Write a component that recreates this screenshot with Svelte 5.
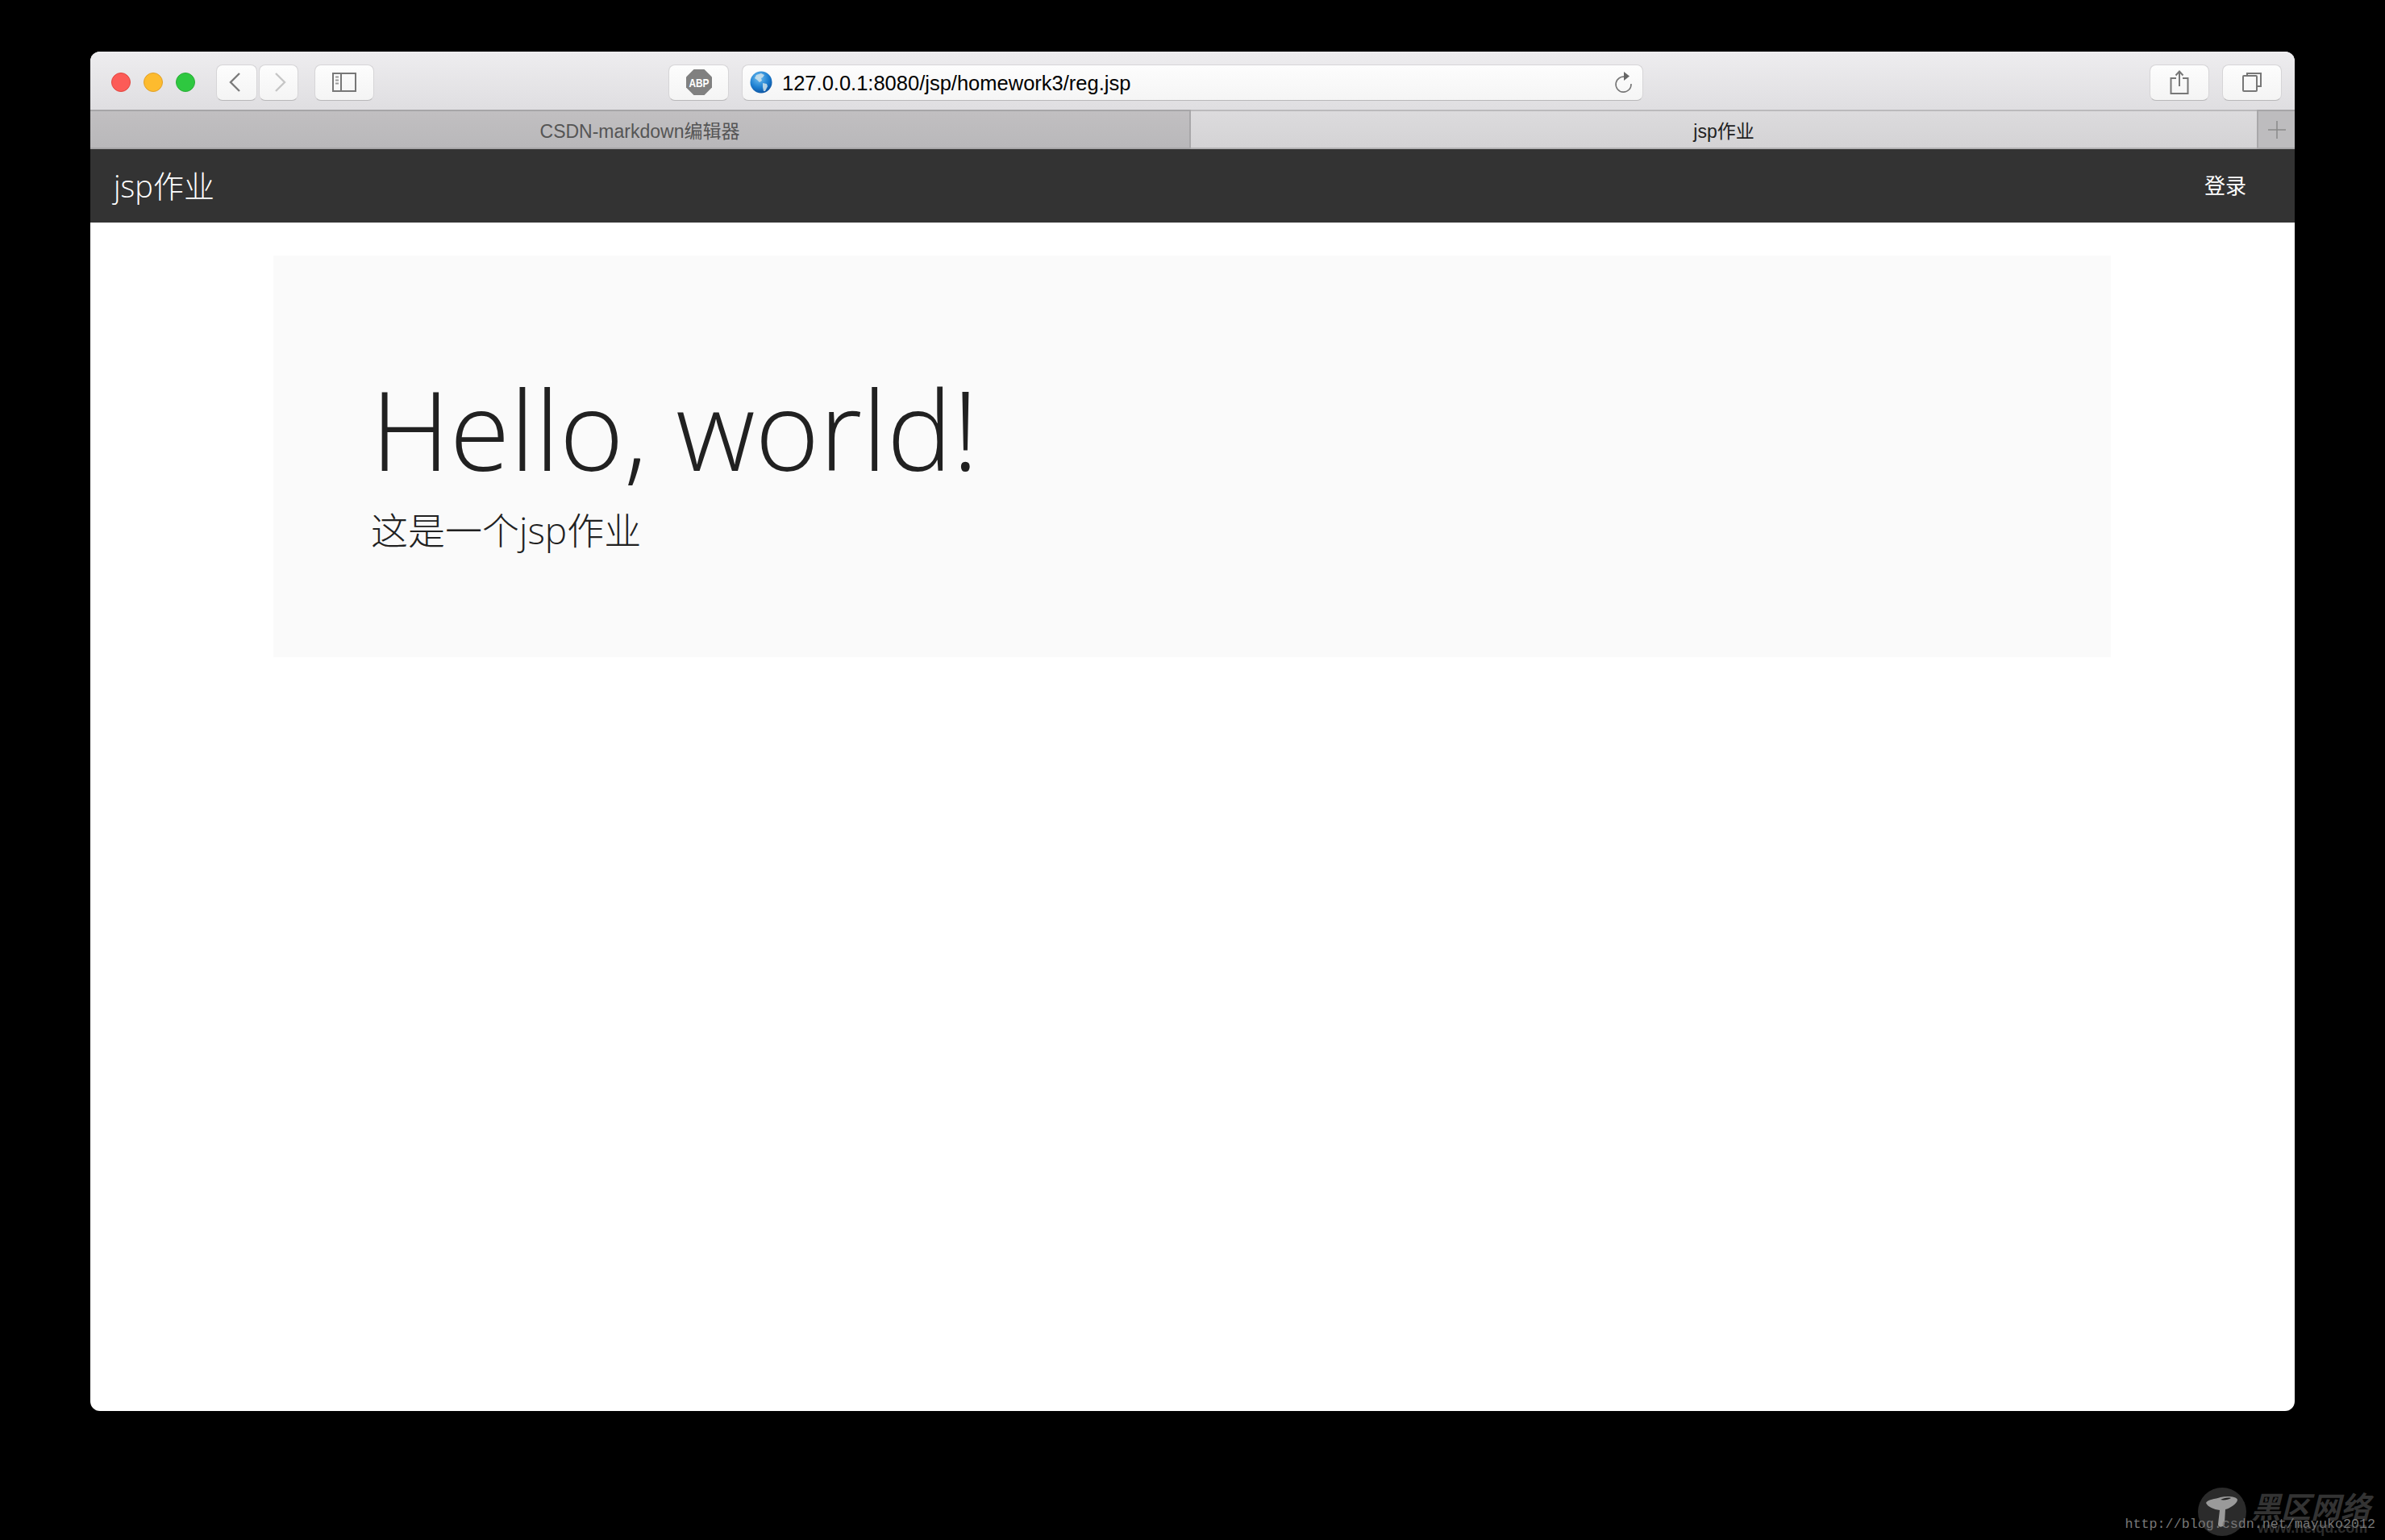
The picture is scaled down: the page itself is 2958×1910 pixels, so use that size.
<script lang="ts">
	const tabs = [
		{ title: 'CSDN-markdown编辑器', active: false },
		{ title: 'jsp作业', active: true }
	];
</script>

<div class="window">
	<header class="toolbar">
		<div class="lights">
			<span class="light red"></span>
			<span class="light yellow"></span>
			<span class="light green"></span>
		</div>
		<div class="nav-group">
			<button class="tool back" aria-label="Back">
				<svg width="16" height="26" viewBox="0 0 16 26"><path d="M14 2 3 13l11 11" fill="none" stroke="#7b7b7b" stroke-width="2.400" /></svg>
			</button>
			<button class="tool forward" aria-label="Forward">
				<svg width="16" height="26" viewBox="0 0 16 26"><path d="M2 2l11 11L2 24" fill="none" stroke="#c6c6c6" stroke-width="2.400" /></svg>
			</button>
		</div>
		<button class="tool sidebar" aria-label="Sidebar">
			<svg width="30" height="24" viewBox="0 0 30 24">
				<rect x="1" y="1" width="28" height="22" fill="none" stroke="#777" stroke-width="2" />
				<path d="M11 1v22" stroke="#777" stroke-width="2" />
				<path d="M4 5.500h4M4 9.500h4M4 13.500h4" stroke="#999" stroke-width="2" />
			</svg>
		</button>
		<button class="tool abp" aria-label="Adblock Plus">
			<svg width="32" height="32" viewBox="0 0 32 32">
				<path d="M9.500 0h13L32 9.500v13L22.500 32h-13L0 22.500v-13z" fill="#808080" />
				<text transform="translate(16 21.500) scale(.88 1.100)" text-anchor="middle" class="abp-text">ABP</text>
			</svg>
		</button>
		<div class="address">
			<svg class="globe" width="28" height="28" viewBox="0 0 28 28">
				<defs>
					<radialGradient id="sea" cx="40%" cy="30%" r="75%">
						<stop offset="0" stop-color="#6fc0f2" />
						<stop offset="0.6" stop-color="#1c7ed0" />
						<stop offset="1" stop-color="#0b4f9c" />
					</radialGradient>
				</defs>
				<circle cx="14" cy="14" r="13.500" fill="url(#sea)" />
				<path d="M8 5l6-2 4 2-2 3-2 1 1 3-3 2-3-3-3-2zM16 15l5 1 1 3-3 6-2 0-1-5z" fill="#cfe2ea" opacity=".85" />
			</svg>
			<span class="url">127.0.0.1:8080/jsp/homework3/reg.jsp</span>
			<svg class="reload" width="24" height="28" viewBox="0 0 24 28">
				<path d="M15 7.500A9.500 9.500 0 1 0 22 16" fill="none" stroke="#777" stroke-width="1.600" />
				<path d="M13 1l7 5.500-7 5.500z" fill="#666" />
			</svg>
		</div>
		<button class="tool share" aria-label="Share">
			<svg width="24" height="30" viewBox="0 0 24 30">
				<path d="M8 10H1.500v19h21V10H16" fill="none" stroke="#777" stroke-width="2" />
				<path d="M12 1.500V20" stroke="#777" stroke-width="2" />
				<path d="M7.500 6.500 12 1.500l4.500 5" fill="none" stroke="#777" stroke-width="2" />
			</svg>
		</button>
		<button class="tool tabs-btn" aria-label="Show all tabs">
			<svg width="26" height="24" viewBox="0 0 26 24">
				<rect x="2" y="4" width="17" height="19" rx="1" fill="none" stroke="#777" stroke-width="2" />
				<path d="M7 4V1h17v16h-5" fill="none" stroke="#777" stroke-width="2" />
			</svg>
		</button>
	</header>

	<div class="tabbar">
		{#each tabs as tab}
			<div class="tab" class:active={tab.active}>{tab.title}</div>
		{/each}
		<div class="new-tab">
			<svg width="22" height="22" viewBox="0 0 22 22"><path d="M11 0v22M0 11h22" stroke="#8a8a8a" stroke-width="1.500" /></svg>
		</div>
	</div>

	<nav class="navbar">
		<a class="brand" href="#top">jsp作业</a>
		<a class="login" href="#top">登录</a>
	</nav>

	<main class="page">
		<section class="jumbotron">
			<h1>Hello, world!</h1>
			<p>这是一个jsp作业</p>
		</section>
	</main>
</div>

<div class="watermark">
	<svg width="60" height="60" viewBox="0 0 60 60">
		<circle cx="30" cy="30" r="30" fill="#2b2b2b" />
		<path d="M10 19c1-4 12-5 18-7 8-2 20-1 21 3 0 5-10 11-15 12l-1 17c0 6-9 6-8 1l2-17c-7-1-15-4-17-9z" fill="#9a9a9a" />
		<path d="M28 15c4-2 9-3 13-2-3 2-9 3-13 2z" fill="#222" />
	</svg>
	<span class="wm-name">黑区网络</span>
	<span class="wm-site">www.heiqu.com</span>
	<span class="wm-url">http://blog.csdn.net/mayuko2012</span>
</div>

<style>
	:global(body) {
		background: #000;
	}

	.window {
		box-sizing: border-box;
		width: 2734px;
		height: 1686px;
		margin: 64px 0 0 112px;
		display: flex;
		flex-direction: column;
		background: #fff;
		border-radius: 12px;
		overflow: hidden;
	}

	.toolbar {
		box-sizing: border-box;
		height: 72px;
		flex: none;
		display: flex;
		align-items: center;
		padding: 4px 16px 0 26px;
		background: linear-gradient(#eeedef, #dfdee1);
	}

	.lights {
		display: flex;
		gap: 16px;
		margin-right: 26px;
	}

	.light {
		width: 24px;
		height: 24px;
		border-radius: 50%;
		box-sizing: border-box;
	}

	.red {
		background: #fc5b57;
		border: 1px solid #e2463f;
	}

	.yellow {
		background: #fdbb2e;
		border: 1px solid #e0a028;
	}

	.green {
		background: #2ec840;
		border: 1px solid #2aad37;
	}

	.nav-group {
		display: flex;
		gap: 2px;
		margin-right: 20px;
	}

	.tool {
		box-sizing: border-box;
		height: 45px;
		display: flex;
		align-items: center;
		justify-content: center;
		padding: 0;
		background: linear-gradient(#fdfdfd, #f4f4f4);
		border: 1px solid #d6d5d7;
		border-bottom-color: #b9b8ba;
		border-radius: 8px;
	}

	.back {
		width: 51px;
		padding-right: 5px;
	}

	.forward {
		width: 49px;
		padding-left: 5px;
	}

	.sidebar {
		width: 74px;
		margin-right: 365px;
	}

	.abp {
		width: 75px;
		margin-right: 16px;
	}

	.abp-text {
		font-family: 'Liberation Sans', sans-serif;
		font-size: 13.500px;
		font-weight: 700;
		fill: #fff;
	}

	.address {
		box-sizing: border-box;
		width: 1118px;
		height: 45px;
		display: flex;
		align-items: center;
		margin-right: 628px;
		padding: 0 12px 0 9px;
		background: linear-gradient(#fdfdfd, #f5f5f5);
		border: 1px solid #d6d5d7;
		border-bottom-color: #b9b8ba;
		border-radius: 8px;
	}

	.url {
		flex: 1;
		margin-left: 12px;
		padding-top: 2px;
		font-family: 'Liberation Sans', sans-serif;
		font-size: 25.500px;
		color: #000;
	}

	.share {
		width: 74px;
		margin-right: 16px;
	}

	.tabs-btn {
		width: 74px;
	}

	.tabbar {
		height: 49px;
		flex: none;
		display: flex;
	}

	.tab {
		box-sizing: border-box;
		width: 1365px;
		flex: none;
		display: flex;
		align-items: center;
		justify-content: center;
		font-family: 'Liberation Sans', 'Noto Sans CJK SC', sans-serif;
		font-size: 23px;
		color: #555;
		background: linear-gradient(#c1bfc1, #b9b8ba);
		border-top: 2px solid #a6a5a7;
		border-bottom: 2px solid #a6a5a7;
		border-right: 2px solid #a8a7a9;
	}

	.tab.active {
		flex: 1;
		width: auto;
		color: #222;
		background: linear-gradient(#dcdbdd, #d4d3d5);
		border-top-color: #bbbabc;
		border-bottom-color: #b2b1b3;
		border-right: none;
	}

	.new-tab {
		box-sizing: border-box;
		width: 47px;
		flex: none;
		display: flex;
		align-items: center;
		justify-content: center;
		background: #bdbcbe;
		border-top: 2px solid #a6a5a7;
		border-bottom: 2px solid #a6a5a7;
		border-left: 2px solid #a8a7a9;
	}

	.navbar {
		box-sizing: border-box;
		height: 91px;
		flex: none;
		display: flex;
		align-items: center;
		justify-content: space-between;
		padding: 0 60px 4px 29px;
		background: #333;
	}

	.brand {
		font-family: 'Open Sans', 'Noto Sans CJK SC', sans-serif;
		font-weight: 300;
		font-size: 38px;
		color: #fff;
		text-decoration: none;
	}

	.login {
		font-family: 'Liberation Sans', 'Noto Sans CJK SC', sans-serif;
		font-size: 26px;
		color: #fff;
		text-decoration: none;
	}

	.page {
		flex: 1;
		padding: 41px 228px 0 227px;
	}

	.jumbotron {
		box-sizing: border-box;
		height: 498px;
		padding: 140px 120px 0 121px;
		background: #fafafa;
		color: #212121;
		font-family: 'Open Sans', 'Noto Sans CJK SC', sans-serif;
		font-weight: 300;
	}

	h1 {
		margin: 0;
		font-size: 136px;
		line-height: 1.1;
		font-weight: 300;
		white-space: nowrap;
	}

	p {
		margin: 18px 0 0;
		font-size: 46px;
		line-height: 1.4;
		font-weight: 300;
	}

	.watermark {
		position: absolute;
		left: 2726px;
		top: 1845px;
		width: 232px;
		height: 65px;
	}

	.wm-name {
		position: absolute;
		left: 66px;
		top: 0;
		font-family: 'Noto Sans CJK SC', sans-serif;
		font-size: 37px;
		line-height: 44px;
		font-weight: 700;
		font-style: italic;
		color: #333;
		white-space: nowrap;
	}

	.wm-site {
		position: absolute;
		left: 74px;
		top: 40px;
		font-family: 'Liberation Sans', sans-serif;
		font-size: 18px;
		font-weight: 700;
		color: #2c2c2c;
		white-space: nowrap;
	}

	.wm-url {
		position: absolute;
		right: 12px;
		top: 36px;
		font-family: 'Liberation Mono', monospace;
		font-size: 16.700px;
		color: #777;
		white-space: nowrap;
	}
</style>
